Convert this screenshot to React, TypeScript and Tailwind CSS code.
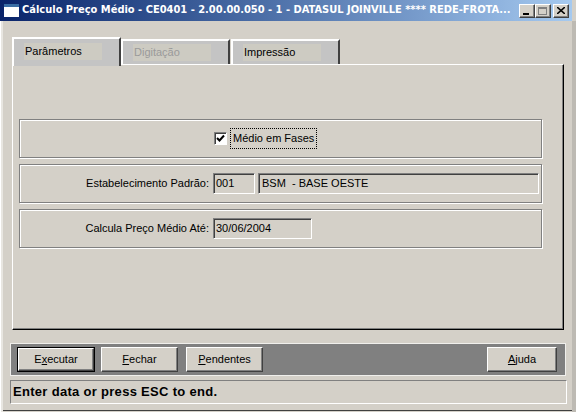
import React from "react";

const raised =
  "bg-[#d4d0c8] border-t border-l border-t-white border-l-white border-b border-r border-b-[#404040] border-r-[#404040] shadow-[inset_-1px_-1px_0_#808080]";
const sunken =
  "bg-[#d4d0c8] border-t border-l border-t-[#808080] border-l-[#808080] border-b border-r border-b-white border-r-white shadow-[inset_1px_1px_0_#404040]";
const sunkenWhite =
  "bg-white border-t border-l border-t-[#808080] border-l-[#808080] border-b border-r border-b-white border-r-white shadow-[inset_1px_1px_0_#404040]";
const etched =
  "border border-[#808080] shadow-[inset_1px_1px_0_#fff,1px_1px_0_#fff]";

function CaptionButton({ children }: { children: React.ReactNode }) {
  return (
    <div className={`w-[16px] h-[14px] flex items-center justify-center ${raised}`}>
      {children}
    </div>
  );
}

function Tab({ label, active, disabled }: { label: string; active?: boolean; disabled?: boolean }) {
  return (
    <div
      className={`relative bg-[#c4c4c4] border-t-2 border-l-2 border-t-white border-l-white border-r-2 border-r-[#404040] flex items-center pl-[10px] w-[109px] ${
        active ? "z-10 -mb-[2px] h-[29px] pb-[2px]" : "mt-[2px] h-[25px]"
      }`}
    >
      <div
        className={`h-[17px] w-[78px] bg-[#cdcbc2] flex items-center pl-[1px] ${
          disabled ? "text-[#9a9a9a]" : "text-black"
        }`}
      >
        {label}
      </div>
    </div>
  );
}

function Button({ label, u, def, w }: { label: string; u: number; def?: boolean; w: string }) {
  return (
    <div className={`${w} h-[25px] ${def ? "border border-black" : ""}`}>
      <div className={`w-full h-full flex items-center justify-center ${raised}`}>
        <span>
          {label.slice(0, u)}
          <span className="underline">{label[u]}</span>
          {label.slice(u + 1)}
        </span>
      </div>
    </div>
  );
}

export default function App() {
  return (
    <div className="w-[576px] h-[412px] bg-[#d4d0c8] flex flex-col font-['Liberation_Sans',Arial,sans-serif] text-[11px] text-black overflow-hidden relative">
      {/* caption */}
      <div className="h-[21px] w-[572px] flex items-center bg-gradient-to-r from-[#0a246a] to-[#a6caf0] pl-[4px] pr-[3px] shrink-0">
        <div className="w-[15px] h-[13px] bg-white border-t-[3px] border-t-[#3a6ea5] mr-[3px] shrink-0" />
        <div className="text-white font-bold text-[11px] whitespace-nowrap font-['DejaVu_Sans_Condensed','Liberation_Sans',sans-serif]">
          Cálculo Preço Médio - CE0401 - 2.00.00.050 - 1 - DATASUL JOINVILLE **** REDE-FROTA...
        </div>
        <div className="flex-1" />
        <div className="flex items-center shrink-0">
          <CaptionButton>
            <div className="w-[6px] h-[2px] bg-black mt-[6px] -ml-[2px]" />
          </CaptionButton>
          <CaptionButton>
            <div className="w-[9px] h-[8px] border border-[#808080] border-t-2 -ml-[1px]" />
          </CaptionButton>
          <div className="w-[2px]" />
          <CaptionButton>
            <svg width="8" height="7" viewBox="0 0 8 7">
              <path d="M0 0 L8 7 M8 0 L0 7" stroke="black" strokeWidth="1.6" />
            </svg>
          </CaptionButton>
        </div>
      </div>

      {/* window body */}
      <div className="flex-1 flex flex-col border-l-[3px] border-l-[#e8e6e1] border-r-[4px] border-r-[#bdbab3] relative">
        <div className="absolute left-[-3px] top-0 bottom-0 w-px bg-white" />
        {/* tabs */}
        <div className="flex items-end ml-[9px] mt-[16px] h-[27px]">
          <Tab label="Parâmetros" active />
          <Tab label="Digitação" disabled />
          <div className="w-[1px]" />
          <Tab label="Impressão" />
        </div>

        {/* tab page */}
        <div className="ml-[9px] w-[552px] h-[266px] border-t border-l border-t-white border-l-white border-b border-r border-b-black border-r-black shadow-[inset_-1px_-1px_0_#808080] pt-[54px] pl-[6px] flex flex-col gap-[6px]">
          <div className={`w-[523px] h-[39px] ${etched} flex items-center pl-[194px]`}>
            <div className="flex items-center">
              <div className={`w-[13px] h-[13px] ${sunkenWhite} flex items-center justify-center`}>
                <svg width="9" height="9" viewBox="0 0 9 9">
                  <path d="M1 4 L3.5 6.5 L8 1.5" stroke="black" strokeWidth="2" fill="none" />
                </svg>
              </div>
              <div className="ml-[3px] px-[2px] py-[1px] border border-dotted border-black">Médio em Fases</div>
            </div>
          </div>
          <div className={`w-[523px] h-[39px] ${etched} flex items-center`}>
            <div className="w-[191px] text-right pr-[2px]">Estabelecimento Padrão:</div>
            <div className={`w-[42px] h-[21px] ${sunken} flex items-center pl-[2px] ml-[2px]`}>001</div>
            <div className={`w-[281px] h-[21px] ${sunken} flex items-center pl-[3px] ml-[3px] whitespace-pre`}>
              BSM  - BASE OESTE
            </div>
          </div>
          <div className={`w-[523px] h-[39px] ${etched} flex items-center`}>
            <div className="w-[191px] text-right pr-[2px]">Calcula Preço Médio Até:</div>
            <div className={`w-[99px] h-[21px] ${sunken} flex items-center pl-[2px] ml-[2px]`}>30/06/2004</div>
          </div>
        </div>

        {/* button bar */}
        <div className="ml-[7px] mt-[13px] w-[556px] h-[33px] bg-[#808080] border border-[#f0efec] flex items-center pl-[6px] pr-[8px]">
          <Button label="Executar" u={1} def w="w-[78px]" />
          <div className="w-[6px]" />
          <Button label="Fechar" u={0} w="w-[77px]" />
          <div className="w-[8px]" />
          <Button label="Pendentes" u={0} w="w-[77px]" />
          <div className="flex-1" />
          <Button label="Ajuda" u={0} w="w-[70px]" />
        </div>

        {/* status line */}
        <div className={`ml-[7px] mt-[4px] w-[557px] h-[24px] ${sunken} shadow-none flex items-center pl-[2px]`}>
          <span className="font-bold text-[13px] font-['Liberation_Sans',sans-serif] tracking-[0.3px]">
            Enter data or press ESC to end.
          </span>
        </div>
        <div className="flex-1" />
        <div className="h-px bg-[#404040] mb-[1px]" />
      </div>
    </div>
  );
}
